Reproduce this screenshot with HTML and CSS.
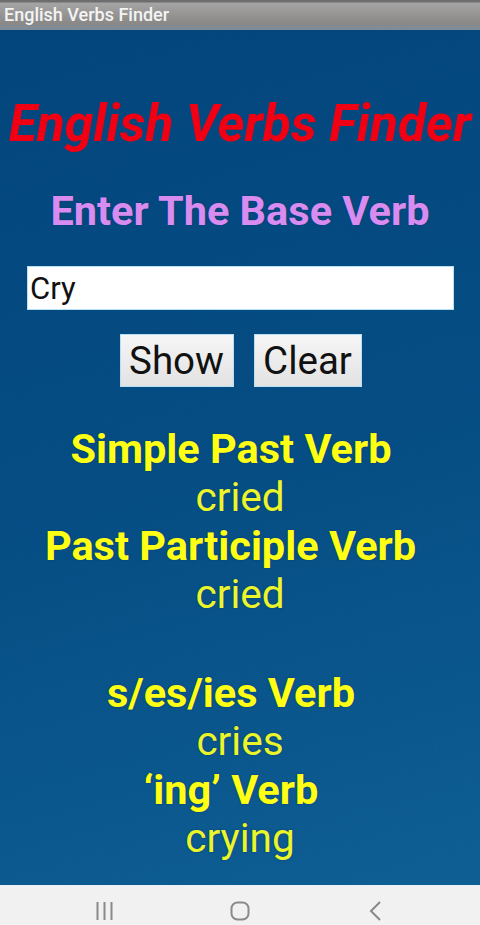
FILE: index.html
```html
<!DOCTYPE html>
<html lang="en">
<head>
<meta charset="utf-8">
<title>English Verbs Finder</title>
<link rel="stylesheet" href="styles.css">
</head>
<body>
<div class="screen">
  <header class="titlebar">English Verbs Finder</header>
  <main class="content">
    <svg class="grain" width="480" height="855" aria-hidden="true">
      <filter id="grain-filter"><feTurbulence type="fractalNoise" baseFrequency="0.7" numOctaves="2" seed="4"/><feColorMatrix type="matrix" values="0 0 0 0 0  0 0 0 0 0.05  0 0 0 0 0.1  0.22 0 0 0 -0.05"/></filter>
      <rect width="480" height="855" filter="url(#grain-filter)"/>
    </svg>
    <h1 class="app-title">English Verbs Finder</h1>
    <h2 class="prompt">Enter The Base Verb</h2>
    <input class="verb-input" type="text" value="Cry">
    <div class="actions">
      <button class="btn btn-show" type="button">Show</button>
      <button class="btn btn-clear" type="button">Clear</button>
    </div>
    <div class="results">
      <div class="label shift-a">Simple Past Verb</div>
      <div class="value">cried</div>
      <div class="label shift-b">Past Participle Verb</div>
      <div class="value">cried</div>
      <div class="spacer"></div>
      <div class="label shift-c">s/es/ies Verb</div>
      <div class="value">cries</div>
      <div class="label shift-c">‘ing’ Verb</div>
      <div class="value">crying</div>
    </div>
  </main>
  <nav class="navbar">
    <svg class="nav-icon" width="20" height="20" viewBox="0 0 20 20"><path d="M2.500 1v18M9.500 1v18M16.500 1v18" fill="none" stroke="#8a8a8a" stroke-width="2"/></svg>
    <svg class="nav-icon" width="20" height="20" viewBox="0 0 20 20"><rect x="1.500" y="1.500" width="17" height="17" rx="6" fill="none" stroke="#8a8a8a" stroke-width="2"/></svg>
    <svg class="nav-icon" width="20" height="20" viewBox="0 0 20 20"><path d="M15 1 L6 10 L15 19" fill="none" stroke="#8a8a8a" stroke-width="2"/></svg>
  </nav>
</div>
</body>
</html>
```
FILE: styles.css
```css
* { box-sizing: border-box; }
html, body { margin: 0; padding: 0; }
body { width: 480px; height: 925px; overflow: hidden; font-family: Roboto, "Liberation Sans", sans-serif; }
.screen { width: 480px; height: 925px; display: flex; flex-direction: column; }
.titlebar {
  height: 30px;
  flex: none;
  padding: 4px 0 0 4px;
  font-size: 18px;
  line-height: 22px;
  font-weight: 500;
  color: #f4f4f4;
  background: linear-gradient(#6e6e6e 0, #6e6e6e 2px, #a5a5a5 3px, #8a8886 24px, #7f8c98 28px);
}
.content {
  position: relative;
  flex: 1;
  display: flex;
  flex-direction: column;
  align-items: center;
  background: linear-gradient(165deg, #03467f 0%, #054e86 50%, #0f6098 100%);
  padding-top: 65px;
}
.grain { position: absolute; top: 0; left: 0; pointer-events: none; }
.app-title, .prompt, .verb-input, .actions, .results { position: relative; }
.app-title {
  margin: 0;
  font-size: 51.500px;
  line-height: 58px;
  font-weight: 700;
  font-style: italic;
  color: #f00012;
  white-space: nowrap;
}
.prompt {
  margin: 34px 0 0;
  font-size: 41.500px;
  line-height: 48px;
  font-weight: 700;
  color: #d98cf0;
  white-space: nowrap;
  text-shadow: 0 0 2px #0a3a70;
}
.verb-input {
  margin-top: 31px;
  width: 427px;
  height: 44px;
  margin-left: 1px;
  padding: 0 2px;
  border: 1px solid #b8e0f5;
  border-radius: 0;
  background: #fff;
  color: #111;
  font-family: inherit;
  font-size: 31px;
  outline: none;
}
.actions { margin-top: 24px; display: flex; gap: 20px; margin-left: 1px; }
.btn {
  height: 53px;
  padding: 0;
  border: 1px solid #b8e0f5;
  border-radius: 0;
  background: linear-gradient(#f6f6f6, #e2e2e2);
  color: #111;
  font-family: inherit;
  font-size: 38.500px;
}
.btn-show { width: 114px; }
.btn-clear { width: 108px; }
.results { margin-top: 37px; width: 100%; display: flex; flex-direction: column; align-items: center; }
.label, .value { line-height: 49px; height: 48.500px; white-space: nowrap; color: #ffff14; text-shadow: 0 0 2px #0a3a70; }
.label { font-size: 41.500px; font-weight: 700; }
.value { font-size: 40.500px; color: #eaf52a; }
.spacer { height: 50px; }
.shift-a { margin-left: -18px; }
.shift-b { margin-left: -19px; }
.shift-c { margin-left: -18px; }
.navbar {
  height: 40px;
  flex: none;
  display: flex;
  justify-content: space-between;
  align-items: center;
  padding: 11px 95px 0 95px;
  background: #f1f1f1;
  border-top: 1px solid #e6f1f8;
}
```
